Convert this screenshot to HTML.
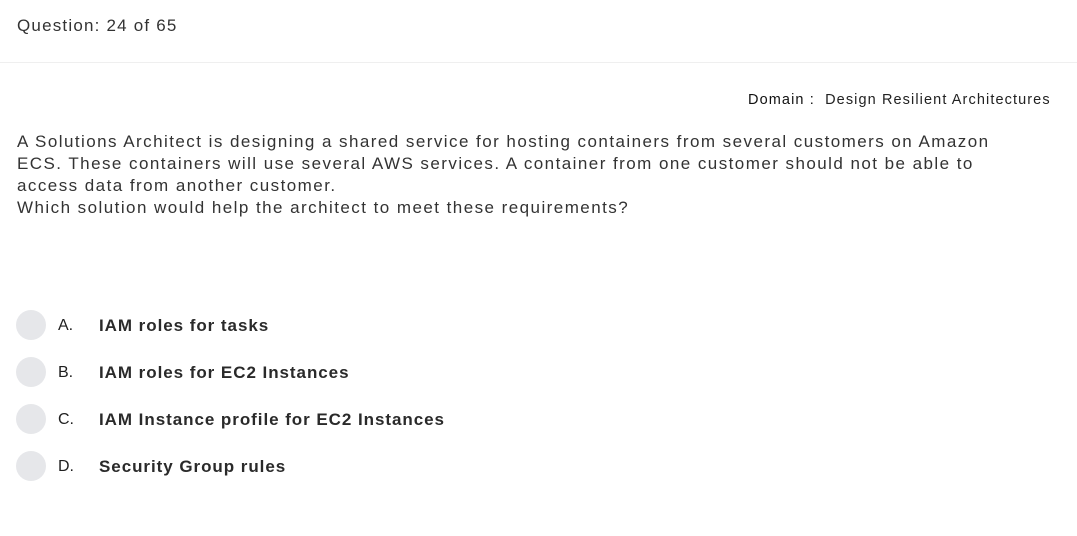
<!DOCTYPE html>
<html><head><style>
body{margin:0;background:#fff;font-family:"Liberation Sans",sans-serif;color:#2b2b2b;width:1077px;height:536px;overflow:hidden;position:relative}
.a{position:absolute;white-space:nowrap}
.hr{position:absolute;left:0;top:62px;width:1077px;height:1px;background:#efefef}
.q{position:absolute;left:17px;top:131px;font-size:17px;line-height:22px;color:#333;white-space:nowrap;letter-spacing:1.45px}
.c{position:absolute;left:16px;width:30px;height:30px;border-radius:50%;background:#e6e7ea}
.l{position:absolute;left:58px;font-size:16px;color:#1f1f1f}
.t{position:absolute;left:99px;font-size:17px;color:#2a2a2a;font-weight:bold;letter-spacing:0.95px}
</style></head><body>
<div class="a" style="left:17px;top:16px;font-size:17px;color:#333;letter-spacing:1.2px">Question: 24 of 65</div>
<div class="hr"></div>
<div class="a" style="left:748px;top:92px;font-size:14.5px;color:#222;letter-spacing:1.1px"><span style="color:#111">Domain :</span>&nbsp; Design Resilient Architectures</div>
<div class="q">A Solutions Architect is designing a shared service for hosting containers from several customers on Amazon<br>ECS. These containers will use several AWS services. A container from one customer should not be able to<br>access data from another customer.<br>Which solution would help the architect to meet these requirements?</div>
<div class="c" style="top:310px"></div><div class="a l" style="top:317px">A.</div><div class="a t" style="top:316px">IAM roles for tasks</div>
<div class="c" style="top:357px"></div><div class="a l" style="top:364px">B.</div><div class="a t" style="top:363px">IAM roles for EC2 Instances</div>
<div class="c" style="top:404px"></div><div class="a l" style="top:411px">C.</div><div class="a t" style="top:410px">IAM Instance profile for EC2 Instances</div>
<div class="c" style="top:451px"></div><div class="a l" style="top:458px">D.</div><div class="a t" style="top:457px">Security Group rules</div>
</body></html>
